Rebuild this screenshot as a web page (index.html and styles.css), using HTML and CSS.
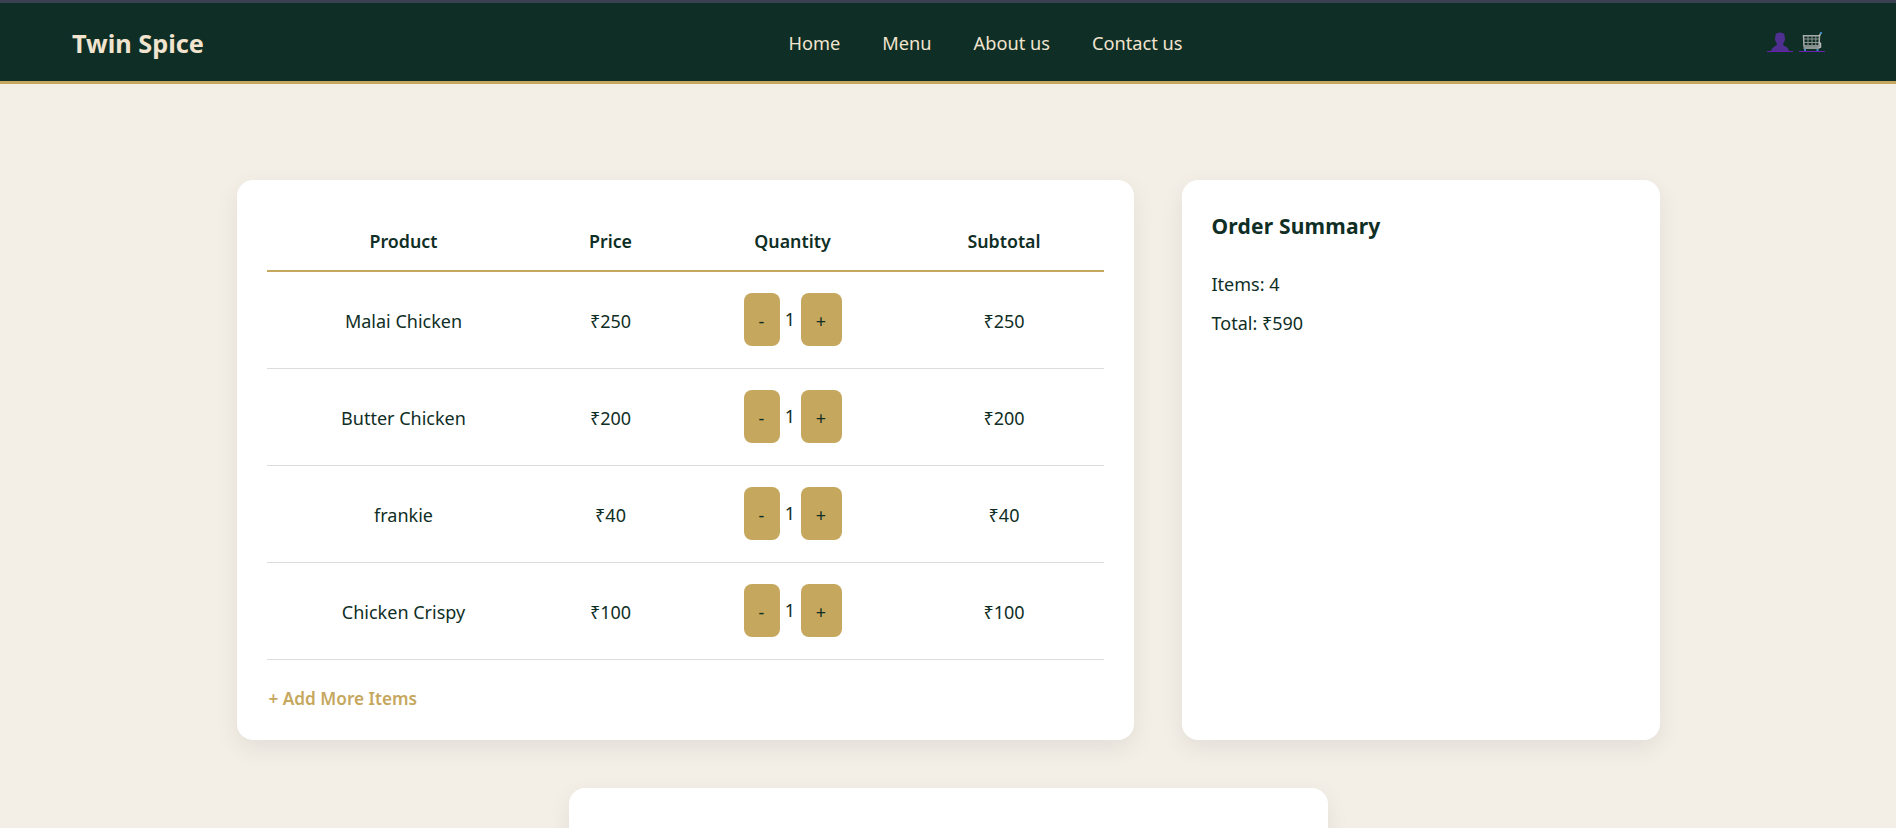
FILE: index.html
```html
<!DOCTYPE html>
<html lang="en">
<head>
    <meta charset="UTF-8">
    <meta name="viewport" content="width=device-width, initial-scale=1.0">
    <title>Twin Spice - Cart</title>
    <link rel="stylesheet" href="styles.css">
</head>
<body>
    <div class="top-strip"></div>
    <nav class="navbar">
        <a class="logo">Twin Spice</a>
        <div class="nav-links">
            <a>Home</a>
            <a>Menu</a>
            <a>About us</a>
            <a>Contact us</a>
        </div>
        <div class="nav-icons">
            <a class="nav-icon">
                <svg width="20" height="19" viewBox="0 0 20 19">
                    <path d="M5.500 3Q6 0.500 10 0.500T14.500 3L15 7Q15 9.500 13.500 11L13 12.500Q13.500 13.800 15.500 14.500T18.500 17.500L19 19H1L1.500 17.500Q2.500 15.300 4.500 14.500T7 12.500L6.500 11Q5 9.500 5 7z" fill="#4f2f8f"/>
                </svg>
            </a>
            <a class="nav-icon">
                <svg width="20" height="19" viewBox="0 0 20 19">
                    <path d="M1.500 3.700H17.500L17 14H2z" fill="none" stroke="#a9adab" stroke-width="1.500"/>
                    <path d="M1.700 7h15.500M1.800 10.500h15.200M6 3.700V14M10 3.700V14M13.800 3.700V14" stroke="#8d9491" stroke-width="1" fill="none"/>
                    <path d="M17.500 3.700L18.800 1M17 10l1.500 1.500v3.500l-2 1H1.500" stroke="#b5b9b7" stroke-width="1.500" fill="none"/>
                    <rect x="18" y="0" width="2" height="2" fill="#3f86c6"/>
                    <rect x="2" y="17" width="2" height="2" fill="#3f86c6"/>
                    <rect x="14.500" y="17" width="2" height="2" fill="#3f86c6"/>
                </svg>
            </a>
        </div>
    </nav>

    <main class="page">
        <div class="cart-row">
            <section class="card cart-card">
                <table class="cart-table">
                    <thead>
                        <tr>
                            <th class="col-product">Product</th>
                            <th class="col-price">Price</th>
                            <th class="col-qty">Quantity</th>
                            <th class="col-sub">Subtotal</th>
                        </tr>
                    </thead>
                    <tbody>
                        <tr>
                            <td>Malai Chicken</td>
                            <td>₹250</td>
                            <td class="qty-cell"><button class="qty-btn">-</button><span class="qty">1</span><button class="qty-btn qty-plus">+</button></td>
                            <td>₹250</td>
                        </tr>
                        <tr>
                            <td>Butter Chicken</td>
                            <td>₹200</td>
                            <td class="qty-cell"><button class="qty-btn">-</button><span class="qty">1</span><button class="qty-btn qty-plus">+</button></td>
                            <td>₹200</td>
                        </tr>
                        <tr>
                            <td>frankie</td>
                            <td>₹40</td>
                            <td class="qty-cell"><button class="qty-btn">-</button><span class="qty">1</span><button class="qty-btn qty-plus">+</button></td>
                            <td>₹40</td>
                        </tr>
                        <tr>
                            <td>Chicken Crispy</td>
                            <td>₹100</td>
                            <td class="qty-cell"><button class="qty-btn">-</button><span class="qty">1</span><button class="qty-btn qty-plus">+</button></td>
                            <td>₹100</td>
                        </tr>
                    </tbody>
                </table>
                <a class="add-more">+ Add More Items</a>
            </section>

            <aside class="card summary-card">
                <h3>Order Summary</h3>
                <p>Items: 4</p>
                <p>Total: ₹590</p>
            </aside>
        </div>

        <section class="card checkout-card"></section>
    </main>
</body>
</html>
```

FILE: styles.css
```css
* {
    box-sizing: border-box;
}
html, body {
    height: 100%;
}
body {
    margin: 0;
    overflow: hidden;
    background-color: #f3eee6;
    color: #0f2e25;
    font-family: "Noto Sans", "Open Sans", sans-serif;
    font-size: 18px;
}
.top-strip {
    height: 3px;
    background-color: #3a4152;
}
.navbar {
    display: flex;
    align-items: center;
    justify-content: space-between;
    height: 81px;
    padding: 2px 71px 0 72px;
    background-color: #0f2e25;
    border-bottom: 3px solid #c6a75e;
}
.logo {
    color: #f1e4cf;
    font-size: 25.300px;
    font-weight: 700;
}
.nav-links {
    display: flex;
    gap: 42px;
}
.nav-links a {
    color: #f1e4cf;
    font-size: 18.200px;
}
.nav-icons {
    display: flex;
    gap: 6px;
    margin-bottom: 4px;
}
.nav-icon {
    display: flex;
    justify-content: center;
    align-items: flex-end;
    width: 26px;
    height: 22px;
    border-bottom: 1px solid #6a1fb0;
}
.page {
    display: flex;
    flex-direction: column;
    align-items: center;
    padding-top: 96px;
}
.cart-row {
    display: flex;
    gap: 48px;
    margin-bottom: 48px;
}
.card {
    background-color: #fff;
    border-radius: 16px;
    box-shadow: 0 8px 24px rgba(0, 0, 0, 0.07);
}
.cart-card {
    width: 897px;
    height: 560px;
    padding: 30px;
}
.summary-card {
    width: 478px;
    height: 560px;
    padding: 30px;
}
.summary-card h3 {
    margin: 2px 0 32px;
    font-size: 21px;
    line-height: 28px;
    letter-spacing: 0.2px;
}
.summary-card p {
    margin: 0 0 14px;
    font-size: 18px;
    line-height: 25px;
}
.cart-table {
    width: 837px;
    border-collapse: collapse;
    table-layout: fixed;
    margin-bottom: 26px;
}
.cart-table th {
    height: 61px;
    padding: 2px 0 0;
    font-size: 17.800px;
    font-weight: 600;
    border-bottom: 2px solid #c6a75e;
}
.cart-table td {
    height: 97px;
    padding: 2px 0 0;
    text-align: center;
    border-bottom: 1px solid #ddd;
}
.cart-table .qty-cell {
    padding: 0;
}
.col-product {
    width: 274px;
}
.col-price {
    width: 140px;
}
.col-qty {
    width: 224px;
}
.col-sub {
    width: 199px;
}
.qty-btn {
    width: 36px;
    height: 53px;
    padding: 2px 0 0;
    vertical-align: middle;
    border: none;
    border-radius: 8px;
    background-color: #c6a75e;
    color: #0f2e25;
    font-family: inherit;
    font-size: 18px;
}
.qty-plus {
    width: 41px;
}
.qty {
    display: inline-block;
    width: 21px;
    vertical-align: middle;
    margin-top: -1px;
}
.add-more {
    margin-left: 2px;
    color: #c6a75e;
    font-size: 17.200px;
    font-weight: 600;
}
.checkout-card {
    width: 759px;
    height: 300px;
}
```
